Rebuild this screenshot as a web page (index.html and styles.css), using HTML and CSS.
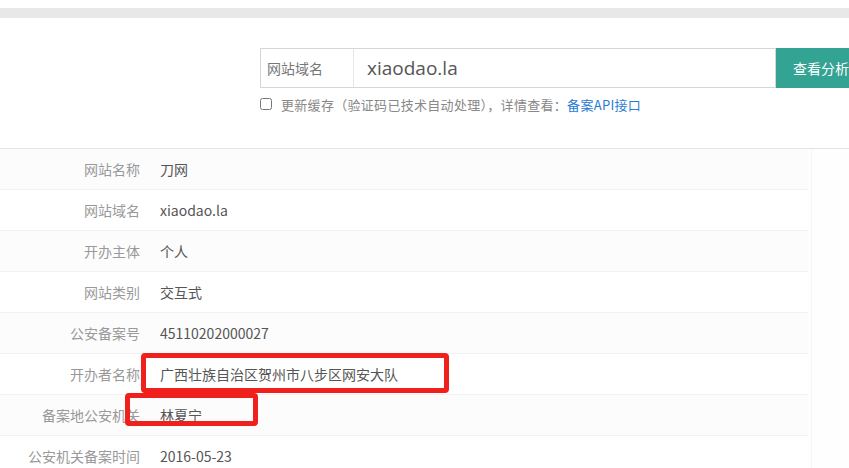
FILE: index.html
```html
<!DOCTYPE html>
<html lang="zh-CN">

<head>
    <meta charset="UTF-8">
    <meta name="viewport" content="width=device-width, initial-scale=1.0">
    <title>备案查询</title>
    <link rel="stylesheet" href="styles.css">
</head>

<body>
    <div class="topbar"></div>
    <div class="searchArea">
        <div class="searchBox">
            <span class="searchLabel">网站域名</span>
            <input class="searchInput" type="text" value="xiaodao.la">
            <button class="searchBtn">查看分析</button>
        </div>
        <label class="cacheRow">
            <input type="checkbox" class="cacheCheck">
            <span>更新缓存（验证码已技术自动处理），详情查看：<a href="#">备案API接口</a></span>
        </label>
    </div>
    <div class="result">
        <div class="infoTable">
            <div class="row"><span class="key">网站名称</span><span class="val">刀网</span></div>
            <div class="row"><span class="key">网站域名</span><span class="val">xiaodao.la</span></div>
            <div class="row"><span class="key">开办主体</span><span class="val">个人</span></div>
            <div class="row"><span class="key">网站类别</span><span class="val">交互式</span></div>
            <div class="row"><span class="key">公安备案号</span><span class="val">45110202000027</span></div>
            <div class="row"><span class="key">开办者名称</span><span class="val">广西壮族自治区贺州市八步区网安大队</span></div>
            <div class="row"><span class="key">备案地公安机关</span><span class="val">林夏宁</span></div>
            <div class="row"><span class="key">公安机关备案时间</span><span class="val">2016-05-23</span></div>
            <!-- red marks drawn on top of the screenshot -->
            <div class="mark mark1"></div>
            <div class="mark mark2"></div>
        </div>
        <div class="side"></div>
    </div>
</body>

</html>
```

FILE: styles.css
```css
* {
    margin: 0;
    padding: 0;
    box-sizing: border-box;
}

body {
    font-family: "Noto Sans CJK SC", "Liberation Sans", sans-serif;
    background: #fff;
    overflow: hidden;
}

.topbar {
    margin-top: 8px;
    height: 10px;
    background-color: #e8e8e8;
}

.searchArea {
    padding: 30px 0 0 260px;
    height: 131px;
    border-bottom: 1px solid #e3e3e3;
}

.searchBox {
    display: flex;
    height: 40px;
}

.searchLabel {
    width: 94px;
    border: 1px solid #d6d6d6;
    border-right: 1px solid #e6e6e6;
    font-size: 14px;
    color: #777;
    line-height: 38px;
    padding-left: 6px;
}

.searchInput {
    width: 422px;
    border: 1px solid #d6d6d6;
    border-left: 0;
    font-family: "Open Sans", "Liberation Sans", sans-serif;
    font-size: 19px;
    color: #555;
    padding-left: 13px;
    outline: none;
}

.searchBtn {
    width: 73px;
    border: 0;
    background-color: #33a393;
    color: #fff;
    font-family: "Noto Sans CJK SC", sans-serif;
    font-size: 14px;
    text-align: left;
    padding-left: 17px;
    white-space: nowrap;
}

.cacheRow {
    display: flex;
    align-items: center;
    margin-top: 7px;
    font-size: 13px;
    color: #888;
    height: 18px;
    letter-spacing: 0.3px;
}

.cacheCheck {
    width: 12px;
    height: 12px;
    margin-right: 9px;
    accent-color: #ccc;
}

.cacheRow a {
    color: #2a7bd3;
    text-decoration: none;
}

.result {
    display: flex;
}

.infoTable {
    position: relative;
    width: 808px;
}

.row {
    display: flex;
    align-items: center;
    height: 41px;
    border-bottom: 1px solid #f1f1f3;
    font-size: 14px;
}

.row:nth-child(odd) {
    background-color: #fcfcfd;
}

.key {
    width: 140px;
    text-align: right;
    color: #999;
}

.val {
    margin-left: 20px;
    color: #555;
}

.side {
    margin-left: 3px;
    flex: 1;
    border-left: 1px solid #f6f6f8;
    background-color: #fefefe;
}

.mark {
    position: absolute;
    border: 5px solid #f0201c;
    border-radius: 4px;
}

.mark1 {
    left: 141px;
    top: 204px;
    width: 308px;
    height: 40px;
}

.mark2 {
    left: 125px;
    top: 244px;
    width: 133px;
    height: 33px;
}
```
